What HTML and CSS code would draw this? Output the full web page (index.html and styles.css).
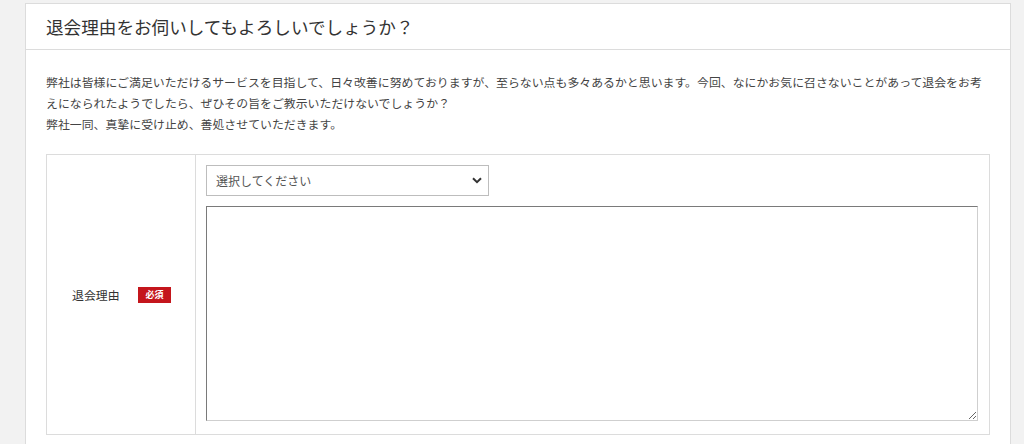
FILE: index.html
```html
<!DOCTYPE html>
<html lang="ja">
<head>
<meta charset="utf-8">
<title>退会理由</title>
<link rel="stylesheet" href="styles.css">
</head>
<body>
<div class="card">
  <div class="card-head">
    <h2 class="card-title">退会理由をお伺いしてもよろしいでしょうか？</h2>
  </div>
  <div class="card-body">
    <p class="intro">弊社は皆様にご満足いただけるサービスを目指して、日々改善に努めておりますが、至らない点も多々あるかと思います。今回、なにかお気に召さないことがあって退会をお考<br>えになられたようでしたら、ぜひその旨をご教示いただけないでしょうか？<br>弊社一同、真摯に受け止め、善処させていただきます。</p>
    <div class="form-table">
      <div class="label-cell">
        <span class="label-text">退会理由</span>
        <span class="badge">必須</span>
      </div>
      <div class="value-cell">
        <div class="select-wrap">
          <select class="select">
            <option>選択してください</option>
          </select>
          <svg class="chevron" width="10" height="7" viewBox="0 0 10 7"><path d="M1 1.2 L5 5.2 L9 1.2" fill="none" stroke="#333" stroke-width="2"/></svg>
        </div>
        <textarea class="textarea"></textarea>
      </div>
    </div>
  </div>
</div>
</body>
</html>
```

FILE: styles.css
```css
html, body {
  margin: 0;
  padding: 0;
  background: #f2f2f2;
}
body {
  padding: 3px 0 0 25px;
  font-family: "Noto Sans CJK JP", "Noto Sans", sans-serif;
  color: #333;
}
.card {
  box-sizing: border-box;
  width: 986px;
  background: #fff;
  border: 1px solid #dcdcdc;
  border-bottom: none;
}
.card-head {
  height: 45px;
  border-bottom: 1px solid #dcdcdc;
  padding: 0 20px;
  display: flex;
  align-items: center;
}
.card-title {
  margin: 0;
  font-size: 17.6px;
  font-weight: normal;
  color: #333;
  line-height: 1;
}
.card-body {
  padding: 21px 20px 10px;
}
.intro {
  margin: 0 -12px 20px 0;
  font-size: 11.9px;
  line-height: 21px;
  color: #444;
}
.form-table {
  display: grid;
  grid-template-columns: 149px 1fr;
  border: 1px solid #dcdcdc;
}
.label-cell {
  border-right: 1px solid #dcdcdc;
  display: flex;
  align-items: center;
  justify-content: space-between;
  padding: 0 24px 0 25px;
}
.label-text {
  font-size: 11.9px;
  color: #333;
}
.badge {
  background: #c4161c;
  color: #fff;
  font-size: 9px;
  font-weight: bold;
  width: 33px;
  height: 16px;
  line-height: 16px;
  text-align: center;
}
.value-cell {
  padding: 10px 10px 13px;
  display: flex;
  flex-direction: column;
  gap: 10px;
}
.select-wrap {
  position: relative;
  width: 283px;
}
.select {
  appearance: none;
  -webkit-appearance: none;
  box-sizing: border-box;
  width: 283px;
  height: 31px;
  border: 1px solid #bdbdbd;
  border-radius: 0;
  background: #fff;
  font-family: "Noto Sans CJK JP", "Noto Sans", sans-serif;
  font-size: 12px;
  color: #555;
  padding: 0 9px;
  margin: 0;
}
.chevron {
  position: absolute;
  right: 7px;
  top: 12px;
  pointer-events: none;
}
.textarea {
  box-sizing: border-box;
  width: 772px;
  height: 215px;
  margin: 0;
  border: 1px solid;
  border-color: #7a7a7a #cfcfcf #cfcfcf #7a7a7a;
  border-radius: 0;
  background: #fff;
  font-family: "Noto Sans CJK JP", "Noto Sans", sans-serif;
  font-size: 12px;
}
```
